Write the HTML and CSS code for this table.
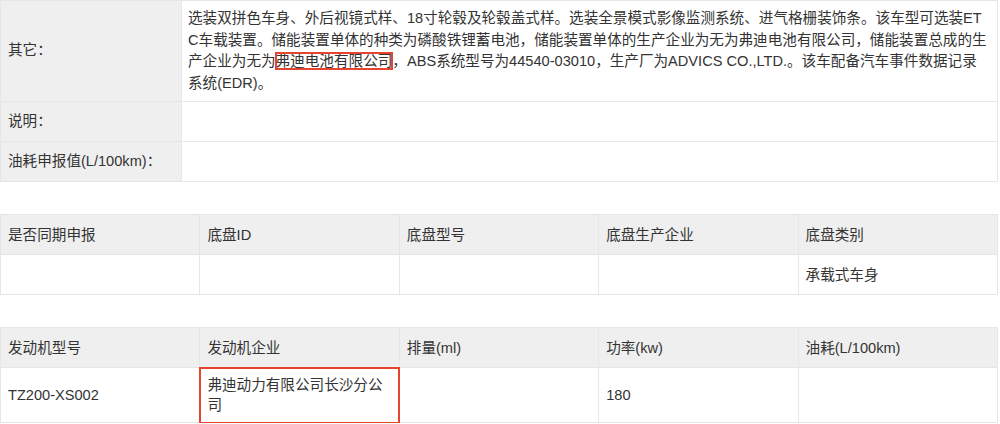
FILE: index.html
```html
<!DOCTYPE html>
<html lang="zh-CN">
  <head>
    <meta charset="UTF-8" />
    <meta name="viewport" content="width=device-width, initial-scale=1.0" />
    <title>车型参数</title>

    <link rel="stylesheet" href="styles.css">
  </head>

  <body>
    <div class="page">
      <table class="info-table">
        <colgroup>
          <col class="label-col" />
          <col />
        </colgroup>
        <tr>
          <th>其它：</th>
          <td class="long-text">
            选装双拼色车身、外后视镜式样、18寸轮毂及轮毂盖式样。选装全景模式影像监测系统、进气格栅装饰条。该车型可选装ETC车载装置。储能装置单体的种类为磷酸铁锂蓄电池，储能装置单体的生产企业为无为弗迪电池有限公司，储能装置总成的生产企业为无为<span class="mark">弗迪电池有限公司</span>，ABS系统型号为44540-03010，生产厂为ADVICS CO.,LTD.。该车配备汽车事件数据记录系统(EDR)。
          </td>
        </tr>
        <tr>
          <th>说明：</th>
          <td></td>
        </tr>
        <tr>
          <th>油耗申报值(L/100km)：</th>
          <td></td>
        </tr>
      </table>

      <table class="grid-table">
        <tr>
          <th>是否同期申报</th>
          <th>底盘ID</th>
          <th>底盘型号</th>
          <th>底盘生产企业</th>
          <th>底盘类别</th>
        </tr>
        <tr>
          <td></td>
          <td></td>
          <td></td>
          <td></td>
          <td>承载式车身</td>
        </tr>
      </table>

      <table class="grid-table">
        <tr>
          <th>发动机型号</th>
          <th>发动机企业</th>
          <th>排量(ml)</th>
          <th>功率(kw)</th>
          <th>油耗(L/100km)</th>
        </tr>
        <tr>
          <td>TZ200-XS002</td>
          <td class="mark-cell">弗迪动力有限公司长沙分公司</td>
          <td></td>
          <td>180</td>
          <td></td>
        </tr>
      </table>
    </div>
  </body>
</html>
```

FILE: styles.css
```css
body {
  margin: 0;
  background-color: #ffffff;
  font-family: "Liberation Sans", "Noto Sans CJK SC", sans-serif;
  font-size: 14.6px;
  color: #333333;
}

.page {
  width: 998px;
}

table {
  width: 998px;
  border-collapse: collapse;
  table-layout: fixed;
}

th,
td {
  border: 1px solid #e6e6e6;
  padding: 7px 6px;
  line-height: 21.5px;
  text-align: left;
  vertical-align: middle;
  font-weight: normal;
  word-break: break-all;
}

tr {
  height: 40px;
}

th {
  background-color: #efefef;
}

.info-table .label-col {
  width: 181px;
}

.info-table th {
  padding-left: 7px;
}

.grid-table {
  margin-top: 32px;
}

.grid-table th,
.grid-table td {
  padding-left: 7px;
  line-height: 20px;
}

/* red annotation boxes */
.mark {
  outline: 2px solid #e5442f;
  outline-offset: -1px;
}

.mark-cell {
  outline: 2px solid #e5442f;
  outline-offset: -1px;
}
```
